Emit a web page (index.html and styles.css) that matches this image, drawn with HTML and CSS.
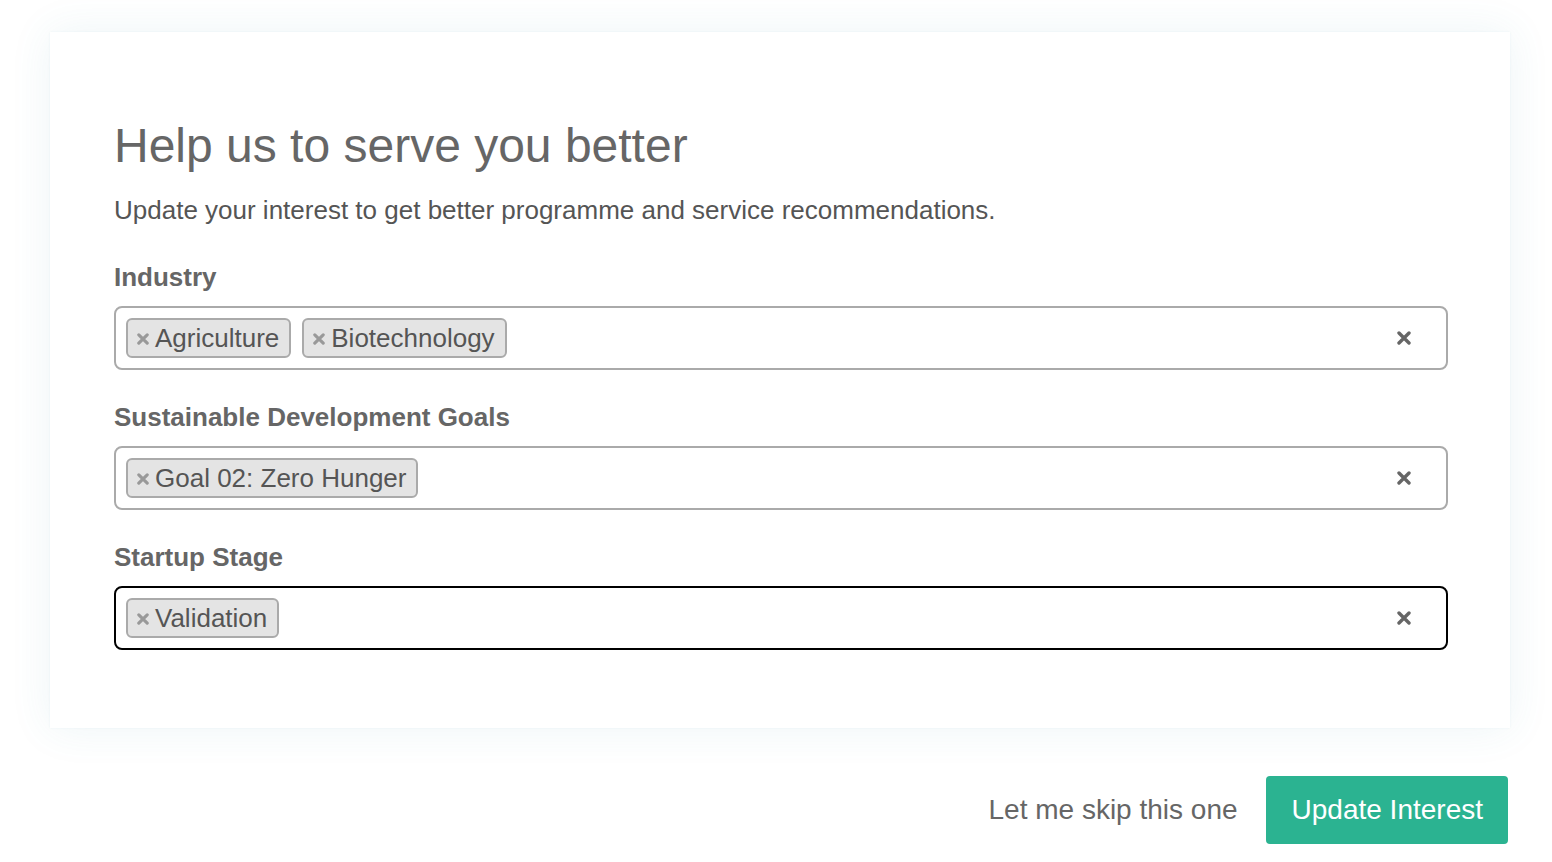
FILE: index.html
```html
<!DOCTYPE html>
<html lang="en">
<head>
<meta charset="utf-8">
<title>Help us to serve you better</title>
<link rel="stylesheet" href="styles.css">
</head>
<body>
<main class="page">
  <section class="card">
    <h1 class="title">Help us to serve you better</h1>
    <p class="subtitle">Update your interest to get better programme and service recommendations.</p>

    <div class="field">
      <label class="label">Industry</label>
      <div class="select">
        <ul class="tags">
          <li class="tag"><svg class="tag-x" viewBox="0 0 10 10"><path d="M1.5 1.5L8.5 8.5M8.5 1.5L1.5 8.5"/></svg>Agriculture</li>
          <li class="tag"><svg class="tag-x" viewBox="0 0 10 10"><path d="M1.5 1.5L8.5 8.5M8.5 1.5L1.5 8.5"/></svg>Biotechnology</li>
        </ul>
        <svg class="clear" viewBox="0 0 14 14"><path d="M2 2L12 12M12 2L2 12"/></svg>
      </div>
    </div>

    <div class="field">
      <label class="label">Sustainable Development Goals</label>
      <div class="select">
        <ul class="tags">
          <li class="tag"><svg class="tag-x" viewBox="0 0 10 10"><path d="M1.5 1.5L8.5 8.5M8.5 1.5L1.5 8.5"/></svg>Goal 02: Zero Hunger</li>
        </ul>
        <svg class="clear" viewBox="0 0 14 14"><path d="M2 2L12 12M12 2L2 12"/></svg>
      </div>
    </div>

    <div class="field">
      <label class="label">Startup Stage</label>
      <div class="select focused">
        <ul class="tags">
          <li class="tag"><svg class="tag-x" viewBox="0 0 10 10"><path d="M1.5 1.5L8.5 8.5M8.5 1.5L1.5 8.5"/></svg>Validation</li>
        </ul>
        <svg class="clear" viewBox="0 0 14 14"><path d="M2 2L12 12M12 2L2 12"/></svg>
      </div>
    </div>
  </section>

  <div class="actions">
    <a class="skip">Let me skip this one</a>
    <button class="primary">Update Interest</button>
  </div>
</main>
</body>
</html>
```
FILE: styles.css
```css
* { box-sizing: border-box; }
html, body { margin: 0; padding: 0; background: #fff; }
body {
  font-family: "Liberation Sans", Arial, Helvetica, sans-serif;
  color: #555;
}
.page {
  padding: 32px 42px 0 50px;
}
.card {
  width: 1460px;
  background: #fff;
  padding: 86px 62px 78px 64px;
  box-shadow: 0 0 40px rgba(60, 140, 170, 0.09), 0 0 2px rgba(60, 140, 170, 0.08);
  display: flex;
  flex-direction: column;
}
.title {
  margin: 0;
  font-size: 48px;
  line-height: 56px;
  font-weight: normal;
  color: #666;
}
.subtitle {
  margin: 21px 0 0;
  font-size: 26px;
  line-height: 30px;
  color: #555;
}
.field {
  display: flex;
  flex-direction: column;
  margin-top: 32px;
}
.field:first-of-type { margin-top: 37px; }
.label {
  font-size: 26px;
  line-height: 30px;
  font-weight: bold;
  color: #666;
}
.select {
  margin-top: 14px;
  height: 64px;
  border: 2px solid #aaa;
  border-radius: 8px;
  display: flex;
  align-items: center;
  padding: 0 35px 0 10px;
}
.select.focused { border-color: #000; }
.tags {
  list-style: none;
  margin: 0;
  padding: 0;
  display: flex;
  gap: 11px;
  flex: 1;
}
.tag {
  height: 40px;
  display: flex;
  align-items: center;
  padding: 0 10px 0 9px;
  background: #e4e4e4;
  border: 2px solid #aaa;
  border-radius: 6px;
  font-size: 26px;
  color: #555;
}
.tag-x {
  width: 12px;
  height: 12px;
  margin-right: 6px;
  margin-top: 1px;
  fill: none;
  stroke: #999;
  stroke-width: 2.6;
  stroke-linecap: round;
}
.clear {
  width: 14px;
  height: 14px;
  fill: none;
  stroke: #666;
  stroke-width: 3.4;
  stroke-linecap: round;
}
.actions {
  width: 1460px;
  margin-top: 48px;
  display: flex;
  justify-content: flex-end;
  align-items: center;
  gap: 28px;
  padding-right: 2px;
}
.skip {
  font-size: 28px;
  color: #666;
  cursor: pointer;
}
.primary {
  height: 68px;
  padding: 0 25px 0 26px;
  background: #2bb391;
  border: none;
  border-radius: 4px;
  color: #fff;
  font-family: "Liberation Sans", Arial, Helvetica, sans-serif;
  font-size: 28px;
}
```
